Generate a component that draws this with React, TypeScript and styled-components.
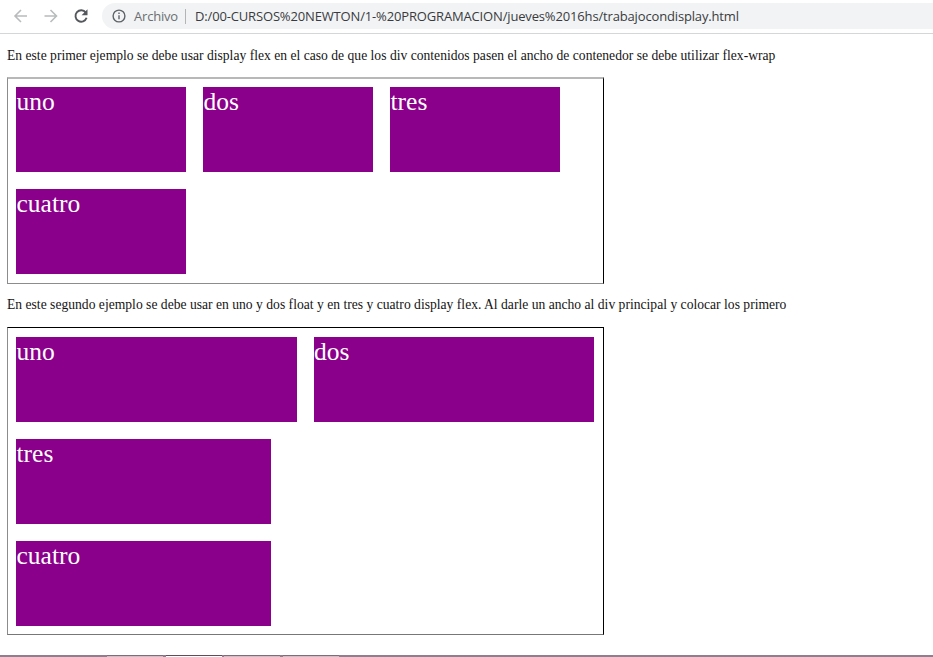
import React from "react";
import styled, { createGlobalStyle } from "styled-components";

const GlobalStyle = createGlobalStyle`
  html, body { margin: 0; background: #fff; }
  body { overflow: hidden; font-family: "Liberation Serif", "Times New Roman", serif; }
`;

const Window = styled.div`
  display: flex;
  flex-direction: column;
  width: 933px;
  height: 657px;
  overflow: hidden;
  background: #fff;
`;

const Toolbar = styled.header`
  display: flex;
  align-items: center;
  flex: none;
  box-sizing: border-box;
  height: 34px;
  padding: 0 0 2px 13px;
  border-bottom: 1px solid #d5d6d8;
`;

const NavButton = styled.button<{ $gap: number; $dark?: boolean }>`
  display: flex;
  width: 16px;
  height: 16px;
  margin: 0 ${(p) => p.$gap}px 0 0;
  padding: 0;
  border: 0;
  background: none;
  color: ${(p) => (p.$dark ? "#54575b" : "#b9bbbd")};
`;

const AddressBar = styled.div`
  display: flex;
  align-items: center;
  flex: 1;
  box-sizing: border-box;
  height: 26px;
  margin-top: 1px;
  padding-left: 10px;
  border-radius: 13px 0 0 13px;
  background: #f1f3f4;
  font: 13px/26px "Open Sans", "Noto Sans", sans-serif;
  white-space: nowrap;
`;

const Scheme = styled.span`
  width: 44px;
  margin-left: 8px;
  color: #6b6e72;
  letter-spacing: -0.2px;
`;

const Divider = styled.span`
  width: 1px;
  height: 15px;
  margin: 0 9px 0 7px;
  background: #b2b4b7;
`;

const Url = styled.span`
  color: #3a3b3e;
  letter-spacing: -0.155px;
`;

const Page = styled.main`
  flex: 1;
  padding-left: 7px;
`;

const Paragraph = styled.p<{ $top: number; $bottom: number }>`
  margin: 0 0 ${(p) => p.$bottom}px;
  padding-top: ${(p) => p.$top}px;
  font-size: 13.6px;
  line-height: 15px;
  letter-spacing: 0.007px;
  color: #151515;
  white-space: nowrap;
`;

const Container = styled.section`
  display: flex;
  box-sizing: border-box;
  width: 597px;
  border: 1px solid #8c8c8c;
  border-right-color: #000;
`;

const WrapContainer = styled(Container)`
  flex-wrap: wrap;
  align-content: flex-start;
  gap: 17px;
  height: 207px;
  padding: 8px;
  border-top: 2px solid #b8b8b8;
`;

const StackContainer = styled(Container)`
  flex-direction: column;
  gap: 17px;
  height: 308px;
  padding: 9px 8px 8px;
  border-top-color: #000;
  border-bottom-color: #777;
`;

const Row = styled.div`
  display: flex;
  gap: 17px;
`;

const Box = styled.div<{ $width: number }>`
  flex: none;
  width: ${(p) => p.$width}px;
  height: 85px;
  background: #8b008b;
  color: #fff;
  font-size: 25.5px;
  line-height: 30px;
  text-indent: 0.5px;
`;

const Taskbar = styled.footer`
  display: flex;
  flex: none;
  gap: 2.5px;
  height: 2px;
  padding-left: 107px;
  background: #8d7f8f;
`;

const Task = styled.span<{ $active?: boolean }>`
  box-sizing: border-box;
  width: 56px;
  border-top: 1px solid ${(p) => (p.$active ? "#5a505a" : "#7a6e7a")};
  background: ${(p) => (p.$active ? "#fff" : "#cdbfca")};
`;

const BackIcon = () => (
  <svg width="16" height="16" viewBox="0 0 16 16" fill="none" stroke="currentColor" strokeWidth="1.6">
    <path d="M14 8H2M8 2L2 8l6 6" />
  </svg>
);

const ForwardIcon = () => (
  <svg width="16" height="16" viewBox="0 0 16 16" fill="none" stroke="currentColor" strokeWidth="1.6">
    <path d="M1.5 8h12M7.5 2l6 6-6 6" />
  </svg>
);

const ReloadIcon = () => (
  <svg width="16" height="16" viewBox="0 0 16 16" fill="none">
    <path d="M12.8 4.6A5.7 5.7 0 1 0 13.6 9.8" stroke="currentColor" strokeWidth="1.9" />
    <path d="M14.5 1.3v6H8.6z" fill="currentColor" />
  </svg>
);

const InfoIcon = () => (
  <svg width="14" height="14" viewBox="0 0 14 14" fill="none" stroke="#5f6368" strokeWidth="1.4">
    <circle cx="7" cy="7" r="5.9" />
    <path d="M7 6.2v4M7 3.6v1.4" />
  </svg>
);

export default function App() {
  return (
    <>
      <GlobalStyle />
      <Window>
        <Toolbar>
          <NavButton $gap={14} aria-label="Atrás"><BackIcon /></NavButton>
          <NavButton $gap={14} aria-label="Adelante"><ForwardIcon /></NavButton>
          <NavButton $gap={13} $dark aria-label="Recargar"><ReloadIcon /></NavButton>
          <AddressBar>
            <InfoIcon />
            <Scheme>Archivo</Scheme>
            <Divider />
            <Url>D:/00-CURSOS%20NEWTON/1-%20PROGRAMACION/jueves%2016hs/trabajocondisplay.html</Url>
          </AddressBar>
        </Toolbar>
        <Page>
          <Paragraph $top={14} $bottom={14}>
            En este primer ejemplo se debe usar display flex en el caso de que los div contenidos pasen el ancho de contenedor se debe utilizar flex-wrap
          </Paragraph>
          <WrapContainer>
            <Box $width={170}>uno</Box>
            <Box $width={170}>dos</Box>
            <Box $width={170}>tres</Box>
            <Box $width={170}>cuatro</Box>
          </WrapContainer>
          <Paragraph $top={13} $bottom={15}>
            En este segundo ejemplo se debe usar en uno y dos float y en tres y cuatro display flex. Al darle un ancho al div principal y colocar los primero
          </Paragraph>
          <StackContainer>
            <Row>
              <Box $width={280.5}>uno</Box>
              <Box $width={280.5}>dos</Box>
            </Row>
            <Box $width={255}>tres</Box>
            <Box $width={255}>cuatro</Box>
          </StackContainer>
        </Page>
        <Taskbar>
          <Task />
          <Task $active />
          <Task />
          <Task />
        </Taskbar>
      </Window>
    </>
  );
}
